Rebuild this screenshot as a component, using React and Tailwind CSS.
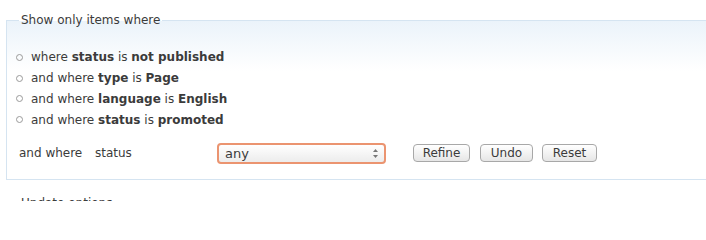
import { useState } from "react";

const filters = [
  { prefix: "where", field: "status", value: "not published" },
  { prefix: "and where", field: "type", value: "Page" },
  { prefix: "and where", field: "language", value: "English" },
  { prefix: "and where", field: "status", value: "promoted" },
];

const Button = ({ children, className = "" }) => (
  <button
    type="button"
    className={`h-[18px] rounded-[4px] border border-[#a8a8a8] bg-[linear-gradient(to_bottom,#ffffff,#e6e6e6)] text-[12px] leading-[16px] text-[#3b3b3b] ${className}`}
  >
    {children}
  </button>
);

const App = () => {
  const [status, setStatus] = useState("any");

  return (
    <div className="w-[706px] h-[201px] overflow-hidden bg-white pt-[10px] font-['DejaVu_Sans',sans-serif] text-[12px] text-[#3b3b3b]">
      <fieldset className="ml-[6px] w-[700px] border border-r-0 border-[#d5e4f1] bg-[linear-gradient(to_bottom,#ebf3fa,#ffffff_50px)] px-0 pt-[16px] pb-[15px]">
        <legend className="ml-[12px] px-[2px] leading-[21px]">Show only items where</legend>

        <ul>
          {filters.map((f, i) => (
            <li key={i} className="flex items-center h-[20.8px]">
              <span className="ml-[9px] mr-[8px] w-[7px] h-[7px] rounded-full border border-[#9a9a9a]" />
              <span>
                {f.prefix} <strong className="font-bold">{f.field}</strong> is{" "}
                <strong className="font-bold">{f.value}</strong>
              </span>
            </li>
          ))}
        </ul>

        <div className="mt-[12px] flex items-center h-[22px]">
          <span className="ml-[12px] w-[76px]">and where</span>
          <span className="w-[122px]">status</span>
          <div className="relative w-[169px]">
            <select
              value={status}
              onChange={(e) => setStatus(e.target.value)}
              className="appearance-none block w-full h-[21px] rounded-[4px] border-2 border-[#eb9470] bg-[linear-gradient(to_bottom,#ffffff,#ececec)] pl-[6px] text-[13px] leading-[17px] text-[#3b3b3b] outline-none"
            >
              <option value="any">any</option>
              <option value="published">published</option>
              <option value="not published">not published</option>
            </select>
            <svg className="pointer-events-none absolute right-[7px] top-[5px]" width="7" height="11" viewBox="0 0 7 11">
              <path d="M3.5 1 L6 4 H1 Z" fill="#777" />
              <path d="M3.5 10 L6 7 H1 Z" fill="#777" />
            </svg>
          </div>
          <div className="ml-[27px] flex gap-[10px]">
            <Button className="w-[57px]">Refine</Button>
            <Button className="w-[53px]">Undo</Button>
            <Button className="w-[55px] -ml-[1px]">Reset</Button>
          </div>
        </div>
      </fieldset>

      <fieldset className="mt-[13px] ml-[6px] w-[700px] border border-r-0 border-[#d5e4f1] px-0">
        <legend className="ml-[12px] px-[2px] leading-[21px]">Update options</legend>
      </fieldset>
    </div>
  );
};

export default App;
